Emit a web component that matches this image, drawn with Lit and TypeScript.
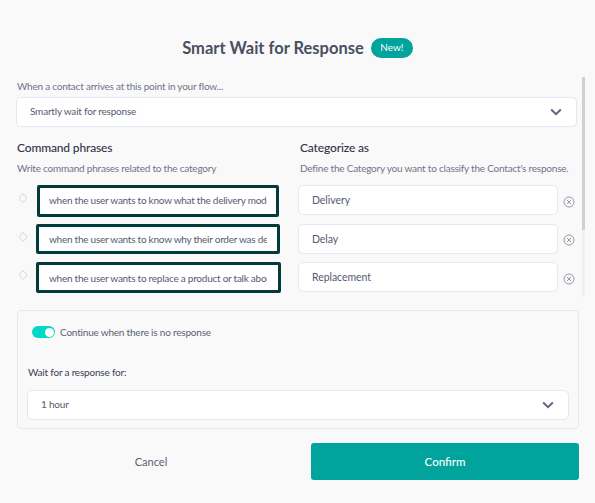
import { LitElement, html, css } from "lit";
import { customElement } from "lit/decorators.js";

const chevron = html`<svg class="chev" viewBox="0 0 12 8" width="12" height="8"><path d="M1.2 1.5 6 6.2 10.8 1.5" fill="none" stroke="#5f6580" stroke-width="2"/></svg>`;
const clear = html`<svg class="clear" viewBox="0 0 12 12" width="12" height="12"><circle cx="6" cy="6" r="5" fill="none" stroke="#8a8fa3" stroke-width="0.9"/><path d="M4 4l4 4M8 4l-4 4" stroke="#8a8fa3" stroke-width="0.9"/></svg>`;
const drag = html`<svg class="drag" viewBox="0 0 10 12" width="10" height="12"><path d="M5 1.5 8.4 5.2V6.8L5 10.5 1.6 6.8V5.2Z" fill="none" stroke="#dfe0e5" stroke-width="1.1"/></svg>`;

const rows = [
  ["when the user wants to know what the delivery modes are", "Delivery", "a"],
  ["when the user wants to know why their order was delayed", "Delay", "b"],
  ["when the user wants to replace a product or talk about it", "Replacement", "c"],
];

@customElement("app-root")
export class AppRoot extends LitElement {
  static styles = css`
    :host { display: block; width: 595px; height: 503px; overflow: hidden; background: #f9f9f9; font-family: Lato, sans-serif; color: #4d5268; box-sizing: border-box; }
    * { box-sizing: border-box; }
    .header { height: 77px; padding-top: 38px; display: flex; justify-content: center; align-items: flex-start; gap: 7px; }
    h1 { margin: 0; font-size: 16.5px; line-height: 20px; font-weight: 700; color: #4a4f63; }
    .badge { height: 20px; width: 42px; border-radius: 10px; background: #00a49c; color: #fff; font-size: 10px; line-height: 19px; text-align: center; }
    .scroller { display: flex; height: 220px; padding-left: 16px; }
    .content { width: 561px; flex: none; }
    .track { width: 3px; margin-left: 5px; height: 220px; background: #eef0f4; }
    .thumb { height: 153px; background: #cfd0d6; }
    .hint { font-size: 10px; letter-spacing: -0.22px; line-height: 14px; color: #6f7488; margin-left: 1px; white-space: nowrap; }
    .top-hint { margin-top: 2px; }
    .field { height: 30px; background: #fff; border: 1px solid #e6e7f0; border-radius: 5px; display: flex; align-items: center; justify-content: space-between; font-size: 10px; letter-spacing: -0.2px; color: #555a70; }
    .select { margin-top: 4px; padding: 0 14px 0 13px; }
    .select span, .select2 span { padding-bottom: 2px; }
    .cols { display: grid; grid-template-columns: 283px 1fr; margin-top: 13px; }
    h2 { margin: 0 0 0 1px; font-size: 12px; letter-spacing: -0.15px; line-height: 16px; font-weight: 500; color: #30344a; }
    .cols .hint { margin-top: 5px; }
    .list { display: grid; grid-template-columns: 20px 244px 18px 260px 19px; grid-auto-rows: 30px; row-gap: 8.5px; margin-top: 10px; align-items: center; }
    .drag { justify-self: start; margin-left: 2px; margin-top: -4px; }
    .phrase { align-self: start; height: 30px; width: 244px; background: #fff; border: 3px solid #003c3c; border-radius: 2px; padding: 0 10px; font-size: 10px; letter-spacing: -0.25px; color: #555a70; display: flex; align-items: center; }
    .phrase span { white-space: nowrap; overflow: hidden; }
    .phrase.a { height: 32px; width: 242px; margin-left: 1px; padding: 0 9px 3px 9px; }
    .phrase.b { height: 29.5px; margin-top: 0.5px; }
    .phrase.c { height: 31px; width: 245px; padding-right: 11px; }
    .cat { padding-left: 13px; font-size: 10.5px; letter-spacing: -0.05px; }
    .clear { margin-left: 5px; margin-top: 3px; }
    .panel { margin: 13px 16px 0 17px; height: 119px; border: 1px solid #e6e7f0; border-radius: 4px; padding: 15px 9px 0 9px; }
    .toggle-row { display: flex; align-items: center; gap: 5px; height: 12px; margin-left: 5px; font-size: 10px; letter-spacing: -0.2px; color: #5c6175; }
    .toggle { width: 23px; height: 12px; border-radius: 6px; background: #00d8c8; display: flex; justify-content: flex-end; align-items: center; padding-right: 1px; }
    .toggle i { display: block; width: 9px; height: 9px; background: #fff; border-radius: 50%; }
    .wait { margin: 27px 0 0 1px; font-size: 10px; letter-spacing: -0.2px; line-height: 14px; color: #3c4055; }
    .select2 { margin-top: 11px; padding: 0 14px 0 13px; width: 542px; }
    .actions { display: grid; grid-template-columns: 268px 268px; column-gap: 26px; margin: 14px 16px 0 17px; }
    .cancel { height: 37px; display: flex; align-items: center; justify-content: center; font-size: 11px; color: #5a5f74; }
    .confirm { height: 37px; border-radius: 3px; background: #00a49c; color: #fff; font-size: 11.5px; font-weight: 500; display: flex; align-items: center; justify-content: center; }
  `;
  render() {
    return html`
      <div class="header"><h1>Smart Wait for Response</h1><div class="badge">New!</div></div>
      <div class="scroller">
        <div class="content">
          <div class="hint top-hint">When a contact arrives at this point in your flow...</div>
          <div class="field select"><span>Smartly wait for response</span>${chevron}</div>
          <div class="cols">
            <div><h2>Command phrases</h2><div class="hint">Write command phrases related to the category</div></div>
            <div><h2>Categorize as</h2><div class="hint">Define the Category you want to classify the Contact's response.</div></div>
          </div>
          <div class="list">
            ${rows.map(([p, c, k]) => html`
              ${drag}
              <div class="phrase ${k}"><span>${p}</span></div>
              <div></div>
              <div class="field cat"><span>${c}</span></div>
              ${clear}
            `)}
          </div>
        </div>
        <div class="track"><div class="thumb"></div></div>
      </div>
      <div class="panel">
        <div class="toggle-row"><div class="toggle"><i></i></div><span>Continue when there is no response</span></div>
        <div class="wait">Wait for a response for:</div>
        <div class="field select2"><span>1 hour</span>${chevron}</div>
      </div>
      <div class="actions"><div class="cancel">Cancel</div><div class="confirm">Confirm</div></div>
    `;
  }
}
